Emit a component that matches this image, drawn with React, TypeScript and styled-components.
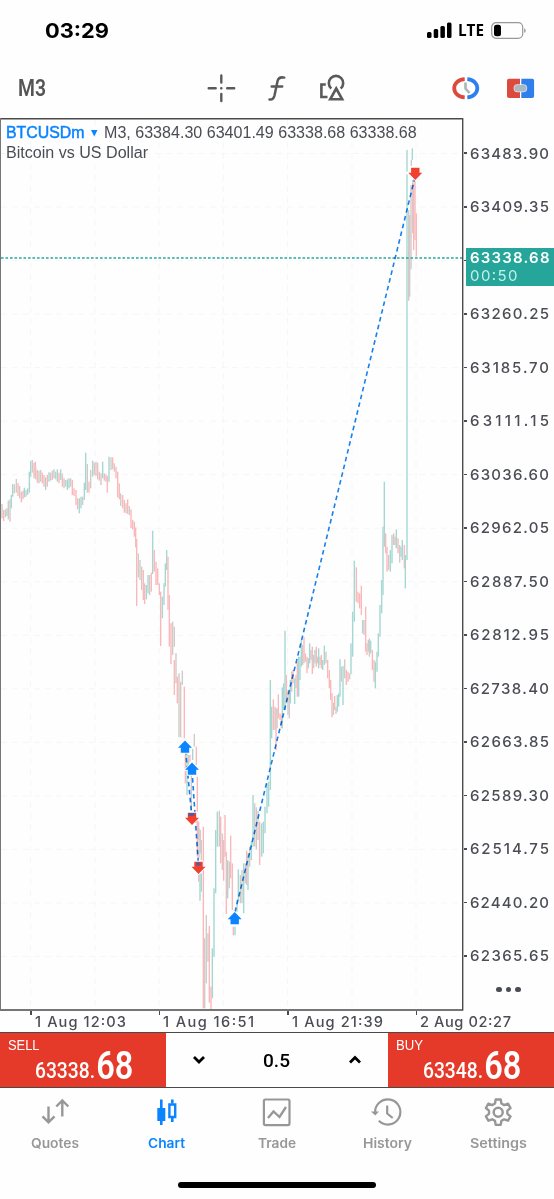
import React from "react";
import styled, { createGlobalStyle } from "styled-components";

const ink = "#4b4d55";
const line = "#4a4a4a";
const blue = "#0a84ff";
const red = "#e53a2a";
const teal = "#26a69a";

const GlobalStyle = createGlobalStyle`
  * { box-sizing: border-box; }
  body { margin: 0; background: #fff; font-family: Inter, "Liberation Sans", sans-serif; }
`;

const Screen = styled.main`
  display: flex;
  flex-direction: column;
  width: 554px;
  height: 1199px;
  overflow: hidden;
  background: #fefefe;
`;

/* Text squeezed or stretched to a fixed advance width */
const Label = styled.text<{ $size: number; $weight?: number; $family?: string }>`
  font-family: ${(p) => p.$family ?? "Inter"}, sans-serif;
  font-size: ${(p) => p.$size}px;
  font-weight: ${(p) => p.$weight ?? 400};
`;

const FitBox = styled.svg`
  display: block;
  flex: none;
  overflow: visible;
`;

const Fit = ({
  text, width, height, base, size, weight, family, color, spacing, stroke,
}: {
  text: string; width: number; height: number; base: number; size: number;
  weight?: number; family?: string; color: string; spacing?: boolean; stroke?: number;
}) => (
  <FitBox width={width} height={height}>
    <Label
      x={0} y={base} $size={size} $weight={weight} $family={family} fill={color}
      stroke={stroke ? color : undefined} strokeWidth={stroke}
      textLength={width} lengthAdjust={spacing ? "spacing" : "spacingAndGlyphs"}
    >
      {text}
    </Label>
  </FitBox>
);

const BigDigits = styled.tspan`
  font-size: 38px;
  font-weight: 600;
`;

const StatusBar = styled.header`
  display: flex;
  justify-content: space-between;
  align-items: center;
  height: 61px;
  padding: 0 29.5px 0 45px;
`;

const StatusIcons = styled.div`
  display: flex;
  align-items: center;
  gap: 6.5px;
`;

const Toolbar = styled.nav`
  display: grid;
  grid-template-columns: 207px 28px 28px 28px 28px 28px 105px 28px 27px 28px;
  align-items: center;
  height: 57px;
  padding-bottom: 3px;
`;

const Timeframe = styled.div`
  padding-left: 18px;
`;

const Icon = styled.svg`
  display: block;
  overflow: visible;
`;

const ChartArea = styled.section`
  display: flex;
  height: 893px;
`;

const Plot = styled.div`
  position: relative;
  width: 464px;
  flex: none;
`;

const Legend = styled.div`
  position: absolute;
  left: 6px;
  top: 4px;
  display: flex;
  flex-direction: column;
`;

const LegendRow = styled.div`
  display: flex;
  align-items: center;
  gap: 6.7px;
  height: 20px;
`;

const PriceAxis = styled.div`
  position: relative;
  flex: 1;
  padding-top: 8.7px;
`;

const PriceRow = styled.div`
  display: flex;
  align-items: center;
  gap: 2.5px;
  height: 53.53px;
  &::before {
    content: "";
    width: 3px;
    height: 1.5px;
    background: ${line};
  }
`;

const PriceTag = styled.div`
  position: absolute;
  left: 1.5px;
  top: 130px;
  width: 90px;
  height: 38px;
  padding: 1px 0 0 4px;
  background: ${teal};
`;

const MoreButton = styled.div`
  display: flex;
  gap: 4.2px;
  padding: 4px 0 0 32.3px;
`;

const Dot = styled.i`
  width: 5.3px;
  height: 5.3px;
  border-radius: 50%;
  background: ${ink};
`;

const TimeAxis = styled.div`
  display: flex;
  height: 22px;
  padding-left: 30px;
  border-bottom: 1.5px solid ${line};
`;

const TimeCell = styled.div`
  width: 128.5px;
  flex: none;
  height: 20px;
  padding: 1px 0 0 4.8px;
  &::before {
    content: "";
    display: block;
    width: 1.5px;
    height: 4px;
    margin: -1px 0 -3px -4.8px;
    background: ${line};
  }
`;

const OrderPanel = styled.section`
  display: grid;
  grid-template-columns: 166px 222px 166px;
  height: 55px;
  border-bottom: 1.5px solid ${line};
`;

const OrderButton = styled.div`
  background: ${red};
  padding: 5px 0 0 8px;
`;

const Quote = styled.div`
  padding-left: 27px;
`;

const Stepper = styled.div`
  display: grid;
  grid-template-columns: 66px 89px 67px;
  align-items: center;
  justify-items: center;
`;

const TabBar = styled.nav`
  display: grid;
  grid-template-columns: repeat(5, 1fr);
  height: 94px;
  padding-top: 10.5px;
`;

const Tab = styled.div`
  display: flex;
  flex-direction: column;
  align-items: center;
  gap: 8px;
`;

const HomeBar = styled.div`
  width: 198px;
  height: 6.5px;
  margin: auto auto 11px 178px;
  flex: none;
  border-radius: 4px;
  background: #000;
`;

/* Bars of each leg of the move: x, high, low and tone
   (t = rising, p = falling, g = mixed), in thirds of a pixel from the origin. */
const legs: { origin: [number, number]; bars: string }[] = [
  {
    origin: [0, 440],
    bars:
      "6 192 235 g,11 210 243 p,16 208 232 g,21 205 228 t,25 182 238 g,30 178 245 g,34 165 205 t,38 132 170 t,43 133 160 g,49 117 158 g,54 130 168 p,59 138 175 g,64 155 187 p,69 152 178 p,73 143 172 t,78 150 170 g,83 145 165 t,88 95 158 t,92 63 110 t,97 60 98 g,102 68 115 p,106 65 105 p,107 80 118 g,112 90 128 p,117 92 130 g,122 90 125 g,127 98 130 p,132 105 140 p,137 112 150 t,142 105 140 p,147 97 125 t,152 98 122 g,157 92 120 p,162 88 115 t,167 95 118 g,172 88 125 t,177 98 130 p,182 88 120 t,187 100 140 p,192 115 145 g,197 120 140 g,202 118 150 t,207 115 145 t,212 115 140 g,217 120 165 p,222 145 168 p,228 150 195 p,233 175 208 p,238 175 220 t,243 170 205 t,248 170 195 g,253 128 180 t,257 38 150 t,262 72 158 g,267 125 158 p,272 90 145 g,278 62 110 t,283 68 105 g,288 65 108 p,293 68 118 g,298 95 122 p,303 100 135 g,308 65 115 t,313 100 122 p,318 103 125 g,322 108 158 p,327 50 125 t,333 52 90 g,338 52 88 p,343 70 95 g,348 80 115 p,353 95 172 p,358 130 178 p,362 160 198 g,368 165 205 p,373 180 218 p,378 190 220 g,383 178 222 p,388 198 225 g,393 208 265 p,398 240 268 p,403 245 290 p,407 262 322 p,410 297 498 p,415 340 412 g,420 360 420 g,425 380 450 g,430 390 480 p,434 430 492 p,439 435 478 t,444 405 460 t,449 405 465 g,454 398 455 p,458 272 402 t,463 330 395 p,468 365 435 p,473 385 435 p,478 430 465 p,482 455 618 p,487 470 535 t,492 430 495 t,496 370 440 t,500 330 390 t,504 350 510 p,508 465 620 p,513 550 672 p,518 545 645 g,523 560 620 g",
  },
  {
    origin: [120, 640],
    bars:
      "163 60 165 p,168 40 130 g,172 110 190 p,177 100 292 g,182 125 292 g,187 92 135 g,193 140 295 p,196 345 430 p,201 340 465 t,206 345 400 g,210 345 365 p,214 400 510 g,218 325 360 t,223 282 320 g,229 320 375 p,232 410 515 p,236 545 600 p,241 570 640 g",
  },
  {
    origin: [150, 820],
    bars:
      "142 0 110 p,147 25 115 g,154 60 120 g,146 160 185 p,150 160 242 t,154 160 215 t,160 20 565 p,164 355 565 g,169 285 490 g,174 340 425 g,178 318 548 p,183 500 568 p,187 385 535 t,192 205 410 t,197 30 220 t,202 -25 80 t,208 -28 80 g,212 -10 130 p,217 40 150 g,221 60 182 p,225 -15 110 p,229 95 282 p,233 120 235 t,238 125 205 g,242 47 175 p,247 130 270 p,250 320 346 p,255 320 346 t,261 240 275 t,265 148 240 t,271 165 250 g,276 150 250 g,281 130 280 t,286 130 190 g,290 92 195 p,294 100 210 t,299 80 140 g,304 65 120 t,309 -75 80 t,314 -50 80 g,319 -38 88 g,324 -27 60 g,329 5 135 p,335 10 110 t,340 5 100 t,345 -40 40 t,351 -110 -20 t,356 -115 -40 t",
  },
  {
    origin: [250, 600],
    bars:
      "61 240 570 t,65 320 415 t,70 298 390 p,75 320 390 g,78 325 450 p,81 325 385 g,85 283 355 p,90 340 360 p,94 345 385 p,97 262 385 t,101 250 330 t,105 92 330 t,109 225 310 p,114 270 345 g,118 275 355 g,121 240 310 t,125 215 275 g,129 210 250 p,134 235 312 t,138 225 265 g,142 185 290 p,146 170 290 t,150 170 240 t,154 120 200 t,158 135 195 g,162 112 190 p,166 160 185 p,171 170 220 p,175 175 205 t,179 130 190 t,183 150 180 g,187 140 222 p,191 165 205 g,195 150 190 t,199 140 200 p,203 170 190 g,206 145 205 t,210 170 195 g,214 165 205 p,218 180 210 t,223 137 195 t,228 155 190 g,233 180 235 p,238 210 265 p,242 240 300 p,246 280 352 p,250 308 345 g,254 288 330 p,258 320 342 g,262 285 335 t,266 280 320 t,270 178 290 t,274 200 245 g,279 198 315 t,284 178 235 g,289 210 255 p,294 215 245 p,299 220 238 g",
  },
  {
    origin: [330, 470],
    bars:
      "63 520 612 t,68 425 560 t,73 272 455 t,79 292 395 p,84 365 400 p,89 370 415 p,94 347 435 p,98 450 490 t,102 450 495 g,107 410 545 p,111 520 555 p,115 510 545 t,118 505 560 g,122 512 550 t,127 540 600 p,132 570 635 p,136 575 655 t,141 545 605 t,145 490 560 t,150 405 500 t,155 330 430 t,159 170 375 t,163 35 230 t,167 190 250 p,171 230 305 p,176 255 300 g,181 240 305 t,186 195 280 t,191 190 225 p,195 200 225 g,199 178 235 t,204 205 250 p,209 225 278 g,213 230 260 t,217 210 270 t,223 225 295 p,226 255 355 t,231 -110 270 t",
  },
  {
    origin: [380, 140],
    bars:
      "81 30 95 t,81 103 880 t,97 25 60 t,94 60 78 g,86 210 482 g,89 225 470 g,93 135 388 g,98 120 280 g,101 130 330 p,105 120 300 p,109 220 350 p",
  },
];

const tones: Record<string, string> = { t: "#a4d9d3", p: "#fbb8bb", g: "#d2cac8" };

const gridY = Array.from({ length: 16 }, (_, i) => 153.5 + i * 53.53);
const gridX = [30.7, 95, 159, 223.3, 287.5, 352, 416];

const prices = [
  "63483.90", "63409.35", "", "63260.25", "63185.70", "63111.15", "63036.60", "62962.05",
  "62887.50", "62812.95", "62738.40", "62663.85", "62589.30", "62514.75", "62440.20", "62365.65",
];

const Marker = ({ x, y, down }: { x: number; y: number; down?: boolean }) => (
  <g transform={`translate(${x} ${y}) scale(1 ${down ? -1 : 1})`}>
    <path
      d="M0 -6.5 L7 0.8 H4.2 V5.8 H-4.2 V0.8 H-7 Z"
      fill={down ? "#f0402f" : blue} stroke="#fff" strokeWidth="1.8" paintOrder="stroke"
    />
  </g>
);

const Trades = styled.g`
  mix-blend-mode: multiply;
`;

const Chart = () => (
  <Icon width="464" height="893" viewBox="0 118 464 893">
    <g stroke="#f6f6f6" strokeWidth="1" strokeDasharray="6 5">
      {gridY.map((y) => <path key={y} d={`M1 ${y}H462`} />)}
      {gridX.map((x) => <path key={x} d={`M${x} 120V1009`} />)}
    </g>
    {legs.map(({ origin, bars }) => (
      <g key={origin.join()} transform={`translate(${origin[0]} ${origin[1]}) scale(${1 / 3})`}>
        {bars.split(",").map((bar, i) => {
          const [x, high, low, tone] = bar.split(" ");
          return <path key={i} d={`M${x} ${high}V${low}`} stroke={tones[tone]} strokeWidth="4.2" />;
        })}
      </g>
    ))}
    <path d="M1 258H462" stroke={teal} strokeWidth="1.5" strokeDasharray="2.6 1.9" />
    <Trades stroke="#1880f0" strokeWidth="1.6" strokeDasharray="4.6 3.4" fill="none">
      <path d="M235 912L415 177" />
      <path d="M185.5 750L192 818" />
      <path d="M192 770L198.5 866" />
    </Trades>
    <Marker x={185} y={747} />
    <Marker x={192} y={769} />
    <Marker x={192} y={818.5} down />
    <Marker x={198.5} y={867.5} down />
    <path d="M188.5 813h6v3h-6zM196 862.5h4.500v3h-4.500z" fill="#5a5a9a" />
    <Marker x={234.7} y={918.5} />
    <Marker x={415.3} y={173.5} down />
    <path d="M0 118.700H462.700V1010H0" fill="none" stroke={line} strokeWidth="1.4" />
    <path d="M0.500 118V1010" stroke="#777" />
  </Icon>
);

const tabColor = (active?: boolean) => (active ? blue : "#979797");

const tabs: { name: string; width: number; active?: boolean; art: React.ReactNode }[] = [
  {
    name: "Quotes", width: 48,
    art: <path d="M8.500 8.500v16M2.500 18.300l6 6 6-6M22.300 18.500V2.500M16.300 8.500l6-6 6 6" strokeWidth="2.4" />,
  },
  {
    name: "Chart", width: 37, active: true,
    art: (
      <>
        <path d="M10.300 1.500v25.500M21.300 1.500v4M21.300 19v5" strokeWidth="2.6" />
        <path d="M6.300 10h8v13h-8z" fill={blue} stroke="none" />
        <path d="M18.400 6.500h5.800v12.500h-5.800z" strokeWidth="2.4" />
      </>
    ),
  },
  {
    name: "Trade", width: 38,
    art: (
      <>
        <rect x="1.9" y="1.5" width="25.6" height="25.6" rx="1.5" strokeWidth="2.2" />
        <path d="M6 20l5.500-6.500 6 5.500 6.500-10" strokeWidth="2.3" />
      </>
    ),
  },
  {
    name: "History", width: 49,
    art: (
      <g transform="translate(-1 0)">
        <path d="M3.200 15A12.600 12.600 0 1 1 6.800 22.800" strokeWidth="2.2" />
        <path d="M-1 13.500h8L3.200 17.500z" fill="#979797" stroke="none" />
        <path d="M15.200 7.500v8l5.500 4.500" strokeWidth="2.2" />
      </g>
    ),
  },
  {
    name: "Settings", width: 57,
    art: (
      <>
        <path
          d="M12.500 1.500h5l.700 4 2.800 1.600 3.800-1.400 2.500 4.300-3.100 2.600v3.200l3.100 2.600-2.500 4.300-3.800-1.400-2.800 1.600-.700 4h-5l-.700-4L9 21.300l-3.800 1.400-2.500-4.300 3.100-2.600v-3.200L2.700 10l2.500-4.300L9 7.100l2.800-1.600z"
          strokeWidth="2.4" strokeLinejoin="round" transform="translate(-.8 0)"
        />
        <circle cx="14.2" cy="14.2" r="4.5" strokeWidth="2.5" />
      </>
    ),
  },
];

const Order = ({ side, width, lead }: { side: string; width: number; lead: string }) => (
  <OrderButton>
    <Fit text={side} width={width} height={14} base={12} size={14} family="Liberation Sans" color="#fff" />
    <Quote>
      <FitBox width={96} height={27}>
        <Label y={26.5} $size={22.5} $weight={500} $family="Roboto" fill="#fff" transform="scale(0.855 1)">
          {lead}
          <BigDigits dx="1.5">68</BigDigits>
        </Label>
      </FitBox>
    </Quote>
  </OrderButton>
);

export default function App() {
  return (
    <Screen>
      <GlobalStyle />
      <StatusBar>
        <Fit text="03:29" width={64} height={16} base={15.5} size={20.5} weight={700} color="#000" />
        <StatusIcons>
          <Icon width="25" height="16" viewBox="0 0 25 16">
            <rect x="0" y="10" width="4.5" height="6" rx="1.5" />
            <rect x="6.7" y="7" width="4.5" height="9" rx="1.5" />
            <rect x="13.4" y="4" width="4.5" height="12" rx="1.5" />
            <rect x="20" y="0.5" width="4.5" height="15.5" rx="1.5" />
          </Icon>
          <Fit text="LTE" width={26} height={12} base={12} size={16} weight={700} family="Open Sans" color="#000" />
          <Icon width="34" height="17" viewBox="0 0 34 17">
            <rect x=".7" y=".7" width="31" height="15.6" rx="4.5" fill="none" stroke="#999" strokeWidth="1.2" />
            <rect x="3" y="2.8" width="7" height="11.4" rx="2.5" />
            <path d="M33.200 6v5q1.500-1 1.500-2.500T33.200 6" fill="#999" />
          </Icon>
        </StatusIcons>
      </StatusBar>

      <Toolbar>
        <Timeframe>
          <Fit text="M3" width={28} height={17} base={16.7} size={23} weight={600} family="Roboto" color="#555" />
        </Timeframe>
        <Icon width="28" height="28" viewBox="0 0 28 28" fill="none" stroke="#5a5a5a" strokeWidth="2.4" strokeLinecap="round">
          <path d="M14.300 1.500v7M14.300 20v7M1.700 14.300h7M20.200 14.300h7M14.200 14.300h.200" />
        </Icon>
        <span />
        <Icon width="28" height="28" viewBox="0 0 28 28" fill="none" stroke="#5a5a5a" strokeWidth="2.5" strokeLinecap="round">
          <path d="M6.500 25.500c3 .500 4.300-1 5-4l3-14.300C15.200 4 16.900 2.700 21.300 3.600M8.700 12.500h10.500" />
        </Icon>
        <span />
        <Icon width="28" height="28" viewBox="0 0 28 28" fill="none" stroke="#5a5a5a" strokeWidth="2.6">
          <path d="M6.800 10.500H2.400v12.500H8.500" />
          <path d="M12.300 14.500A7.200 7.200 0 1 1 21.700 14.500" />
          <path d="M17.200 14.500l6 10.800h-12z" />
        </Icon>
        <span />
        <Icon width="28" height="28" viewBox="0 0 28 28" fill="none">
          <path d="M12.700 5.200C6 5.500 2.200 9.800 2.200 14.300S6 23.100 12.700 23.400" stroke="#dc4a3e" strokeWidth="3.8" />
          <path d="M15.300 5.200C21.500 5.500 25.300 9.800 25.300 14.300S21.500 23.100 15.300 23.400" stroke="#2f80ed" strokeWidth="3.8" />
          <path d="M13.500 8.500v6l4 4.500" stroke="#a9b4ba" strokeWidth="2.6" />
        </Icon>
        <span />
        <Icon width="28" height="28" viewBox="0 0 28 28">
          <path d="M2 4.700h11v19.300H2q-2 0-2-2V6.700q0-2 2-2z" fill="#dc4a3e" />
          <path d="M14.300 4.700h11q1.800 0 1.800 2v15.300q0 2-1.800 2h-11z" fill="#2f80ed" />
          <rect x="7.3" y="11" width="12.2" height="6.5" rx="3.2" fill="#a9b8c2" stroke="#fff" strokeWidth="1.4" strokeOpacity=".8" paintOrder="stroke" />
        </Icon>
      </Toolbar>

      <ChartArea>
        <Plot>
          <Chart />
          <Legend>
            <LegendRow>
              <Fit text="BTCUSDm" width={78.5} height={12} base={11.9} size={16} stroke={0.5} family="Liberation Sans" color={blue} />
              <Icon width="6" height="8" viewBox="0 0 6 8"><path d="M0 2h6.500L3.250 8.500z" fill={blue} /></Icon>
              <Fit text="M3, 63384.30 63401.49 63338.68 63338.68" width={312.7} height={12} base={11.9} size={16} family="Liberation Sans" color={ink} />
            </LegendRow>
            <LegendRow>
              <Fit text="Bitcoin vs US Dollar" width={142} height={12} base={11.5} size={16} family="Liberation Sans" color={ink} />
            </LegendRow>
          </Legend>
        </Plot>
        <PriceAxis>
          {prices.map((price, i) => (
            <PriceRow key={i}>
              {price && <Fit text={price} width={79} height={11} base={11} size={15} weight={500} color={ink} spacing />}
            </PriceRow>
          ))}
          <MoreButton><Dot /><Dot /><Dot /></MoreButton>
          <PriceTag>
            <Fit text="63338.68" width={79.5} height={17} base={14.3} size={15} weight={600} color="#fff" spacing />
            <Fit text="00:50" width={47.5} height={17} base={14.5} size={15} color="#c4f0eb" spacing />
          </PriceTag>
        </PriceAxis>
      </ChartArea>

      <TimeAxis>
        {["1 Aug 12:03", "1 Aug 16:51", "1 Aug 21:39", "2 Aug 02:27"].map((time) => (
          <TimeCell key={time}>
            <Fit text={time} width={91} height={16} base={15} size={14.6} weight={500} color={ink} spacing />
          </TimeCell>
        ))}
      </TimeAxis>

      <OrderPanel>
        <Order side="SELL" width={31.5} lead="63338." />
        <Stepper>
          <Icon width="12" height="8" viewBox="0 0 12 8" fill="none" stroke="#000" strokeWidth="2.8"><path d="M1 1l5 5 5-5" /></Icon>
          <Fit text="0.5" width={27} height={13} base={14} size={18.5} weight={500} family="Roboto" color="#000" />
          <Icon width="12" height="8" viewBox="0 0 12 8" fill="none" stroke="#000" strokeWidth="2.8"><path d="M1 6.500l5-5 5 5" /></Icon>
        </Stepper>
        <Order side="BUY" width={27} lead="63348." />
      </OrderPanel>

      <TabBar>
        {tabs.map(({ name, width, active, art }) => (
          <Tab key={name}>
            <Icon width="30" height="30" viewBox="0 0 30 30" fill="none" stroke={tabColor(active)}>{art}</Icon>
            <Fit text={name} width={width} height={14} base={12} size={13} weight={600} color={tabColor(active)} />
          </Tab>
        ))}
      </TabBar>
      <HomeBar />
    </Screen>
  );
}
